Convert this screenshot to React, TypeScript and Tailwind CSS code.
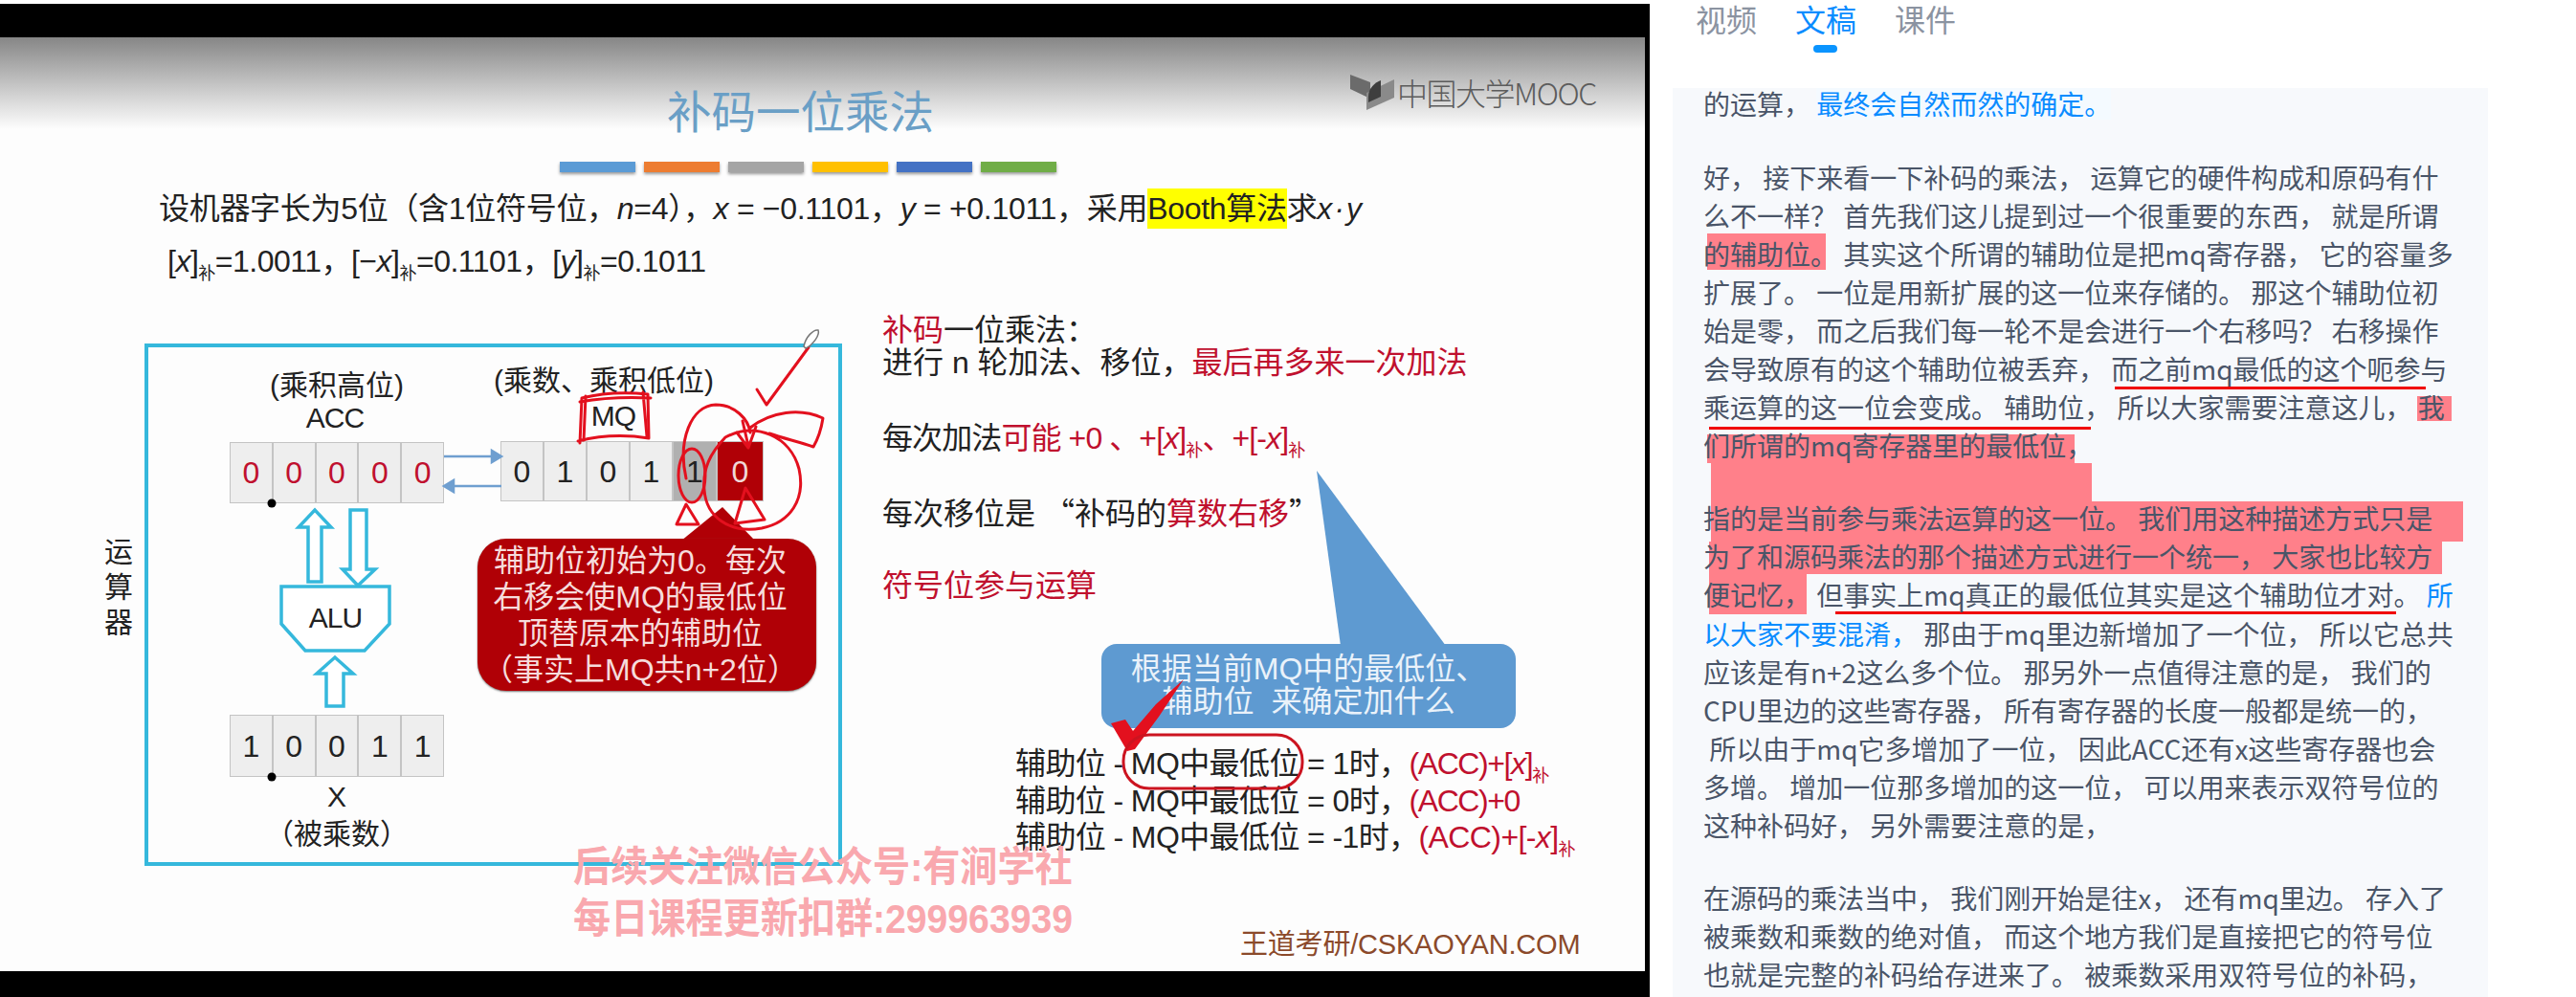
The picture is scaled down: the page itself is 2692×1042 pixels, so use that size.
const sans = "font-['Liberation_Sans','Noto_Sans_CJK_SC',sans-serif]";

function Sub() {
  return <span className="text-[18px] leading-[0] align-[-8px]">补</span>;
}

function Cell({ children, className = '' }: { children?: string; className?: string }) {
  return (
    <div className={`flex items-center justify-center border border-[#c4c4c4] text-[32px] ${className}`}>{children}</div>
  );
}

function Register({ bits, className, cellClass }: { bits: string[]; className: string; cellClass: string }) {
  return (
    <div className={`grid grid-cols-5 w-full ${className}`}>
      {bits.map((b, i) => (
        <Cell key={i} className={cellClass}>{b}</Cell>
      ))}
    </div>
  );
}

function Drawings() {
  return (
    <svg className="absolute left-0 top-0 w-[1724px] h-[1042px] pointer-events-none" viewBox="0 0 1724 1042" fill="none">
      {/* arrows between ACC and MQ */}
      <g stroke="#6f9fd0" strokeWidth="2.5" fill="#6f9fd0">
        <path d="M464 477H518" />
        <path d="M524 477L514 471V483Z" />
        <path d="M470 508H524" />
        <path d="M464 508L474 502V514Z" />
      </g>
      {/* hollow bus arrows and ALU */}
      <g stroke="#35b8dc" strokeWidth="3.5" fill="#fff">
        <path d="M322 608V551H312L329 533L346 551H336V608Z" />
        <path d="M366 533H383V595H392L374 612L358 595H366Z" />
        <path d="M341 738V704H331L350 687L369 704H359V738Z" />
        <path d="M294 613H407V652L381 680H319L294 652Z" />
      </g>
      <circle cx="284" cy="526" r="4.5" fill="#000" />
      <circle cx="284" cy="812" r="4.5" fill="#000" />
      {/* callout pointers */}
      <path d="M712 565L755 530L789 565Z" fill="#b00006" />
      <path d="M1376 492L1401 675H1511Z" fill="#5e9ad1" />
    </svg>
  );
}

function Scribbles() {
  return (
    <svg className="absolute left-0 top-0 w-[1724px] h-[1042px] pointer-events-none" viewBox="0 0 1724 1042" fill="none">
      <g stroke="#e3101e" strokeWidth="3" strokeLinecap="round" strokeLinejoin="round">
        {/* MQ box */}
        <path d="M606 463L608 416Q640 408 677 412L678 458Q640 452 604 461" />
        <path d="M612 414L610 460M672 410L676 456M606 420Q640 414 680 416" />
        {/* tick near pen */}
        <path d="M845 363L801 423L791 407" />
        {/* loops round the low bits */}
        <ellipse cx="723" cy="497" rx="14" ry="28" />
        <path d="M717 500C708 460 722 424 748 423C768 423 782 438 784 452" />
        <path d="M758 457C790 440 826 456 835 490C842 522 826 546 796 552C762 558 738 540 736 512C734 490 742 474 758 457Z" />
        <path d="M784 447C806 430 836 426 860 437C858 450 854 460 850 467C836 462 818 458 804 453" />
        <path d="M770 452L782 468L790 446M776 440L782 466" />
        <path d="M717 527L707 548L730 548Z" />
        <path d="M779 510L768 547L799 543Z" />
      </g>
      {/* pen cursor */}
      <path d="M840 362C842 352 850 344 855 345C857 350 850 360 842 364Z" fill="#fff" stroke="#777" strokeWidth="1.5" />
      {/* big tick and ring on the formula */}
      <path d="M1237 710L1208 736L1184 764L1176 752L1161 756L1178 785L1186 783L1211 749Z" fill="#e3101e" />
      <rect x="1174" y="768" width="187" height="56" rx="27" stroke="#cc1420" strokeWidth="3" />
    </svg>
  );
}

function MoocLogo() {
  return (
    <svg className="w-[48px] h-[38px] shrink-0" viewBox="0 0 48 38">
      <path d="M0 1L21 9V26L0 16Z" fill="#6b6b6b" />
      <path d="M17 20L46 6V25L17 38Z" fill="#8a8a8a" />
      <path d="M19 24C19 15 26 9 32 7V24L19 30Z" fill="#3e3e3e" />
    </svg>
  );
}

function Slide() {
  return (
    <div className={`absolute left-0 top-0 w-[1724px] h-[1042px] text-[#222] ${sans}`}>
      {/* title and colour bars */}
      <div className="absolute left-[585px] top-[93px] flex flex-col items-start gap-[26px]">
        <div className="ml-[112px] text-[46.5px] leading-[50px] text-[#6a9fc6] whitespace-nowrap">补码一位乘法</div>
        <div className="flex gap-[9px]">
          <div className="w-[79px] h-[11px] bg-[#5b9bd5] shadow-[0_2px_3px_#999]" />
          <div className="w-[79px] h-[11px] bg-[#ed7d31] shadow-[0_2px_3px_#999]" />
          <div className="w-[79px] h-[11px] bg-[#a5a5a5] shadow-[0_2px_3px_#999]" />
          <div className="w-[79px] h-[11px] bg-[#ffc000] shadow-[0_2px_3px_#999]" />
          <div className="w-[79px] h-[11px] bg-[#4472c4] shadow-[0_2px_3px_#999]" />
          <div className="w-[79px] h-[11px] bg-[#70ad47] shadow-[0_2px_3px_#999]" />
        </div>
      </div>
      <div className="absolute left-[1411px] top-[77px] flex items-start gap-[1px]">
        <MoocLogo />
        <div className="font-['Noto_Sans_CJK_SC',sans-serif] text-[32px] leading-[38px] font-light text-[#5c5c5c] tracking-[-1.5px] whitespace-nowrap">中国大学MOOC</div>
      </div>

      {/* problem statement */}
      <div className="absolute left-[166px] top-[197px] flex flex-col gap-[14px] whitespace-nowrap">
        <div className="text-[32px] leading-[42px] tracking-[-0.3px]">
          设机器字长为5位（含1位符号位，<i>n</i>=4），<i>x</i> = −0.1101，<i>y</i> = +0.1011，采用<span className="inline-block bg-[#ffff00]">Booth算法</span>求<i className="tracking-[2px]">x·y</i>
        </div>
        <div className="pl-[9px] text-[32px] leading-[40px] tracking-[-0.5px]">
          [<i>x</i>]<Sub />=1.0011，[−<i>x</i>]<Sub />=0.1101，[<i>y</i>]<Sub />=0.1011
        </div>
      </div>

      {/* CPU box */}
      <div className="absolute left-[151px] top-[359px] w-[729px] h-[546px] border-[4px] border-[#35b8dc]" />
      <div className="absolute left-[108px] top-[558px] w-[32px] text-[30px] leading-[37px] text-center">运算器</div>

      <div className="absolute left-[240px] top-[386px] w-[224px] flex flex-col items-center text-[30px] leading-[34px] whitespace-nowrap">
        <div>(乘积高位)</div>
        <div className="mb-[8px] -ml-[4px] tracking-[-1px]">ACC</div>
        <Register bits={['0', '0', '0', '0', '0']} className="h-[64px]" cellClass="bg-[#eeeeee] text-[#c0102e]" />
      </div>

      <div className="absolute left-[523px] top-[378px] w-[275px] flex flex-col items-start text-[30px] whitespace-nowrap">
        <div className="-ml-[7px] leading-[40px]">(乘数、乘积低位)</div>
        <div className="ml-[90px] w-[56px] mb-[9px] leading-[34px] text-center tracking-[-1px]">MQ</div>
        <div className="w-full h-[63px] flex">
          <Cell className="w-[45px] bg-[#eeeeee]">0</Cell>
          <Cell className="w-[45px] bg-[#eeeeee]">1</Cell>
          <Cell className="w-[45px] bg-[#eeeeee]">0</Cell>
          <Cell className="w-[45px] bg-[#eeeeee]">1</Cell>
          <Cell className="w-[46px] bg-[#b0b0b0] border-[#b0b0b0]">1</Cell>
          <Cell className="w-[49px] bg-[#b00006] border-[#b00006] text-[#f0d8d8]">0</Cell>
        </div>
      </div>

      <div className="absolute left-[240px] top-[747px] w-[224px] flex flex-col items-center text-[30px] whitespace-nowrap">
        <Register bits={['1', '0', '0', '1', '1']} className="h-[65px]" cellClass="bg-[#eeeeee]" />
        <div className="mt-[1px] leading-[40px]">X</div>
        <div className="leading-[38px]">（被乘数）</div>
      </div>

      <Drawings />

      <div className="absolute left-[294px] top-[626px] w-[113px] text-center text-[30px] leading-[40px] tracking-[-1px]">ALU</div>

      {/* red callout */}
      <div className="absolute left-[499px] top-[563px] w-[354px] h-[159px] rounded-[30px] bg-[#b00006] shadow-[0_1px_2px_#777] flex flex-col items-center pt-[4px] pr-[14px] text-[32px] leading-[38px] text-[#f6dcdc] whitespace-nowrap">
        <div>辅助位初始为0。每次</div>
        <div>右移会使MQ的最低位</div>
        <div>顶替原本的辅助位</div>
        <div>（事实上MQ共n+2位）</div>
      </div>

      {/* right hand notes */}
      <div className="absolute left-[922px] top-[328px] flex flex-col text-[32px] leading-[34px] whitespace-nowrap">
        <div><span className="text-[#c0102e]">补码</span>一位乘法：</div>
        <div>进行 n 轮加法、移位，<span className="text-[#c0102e]">最后再多来一次加法</span></div>
        <div className="mt-[45px] tracking-[-0.9px]">每次加法<span className="text-[#c0102e]">可能 +0 、+[<i>x</i>]<Sub />、+[-<i>x</i>]<Sub /></span></div>
        <div className="mt-[45px]">每次移位是 <span className="font-['Noto_Sans_CJK_SC',sans-serif] leading-[0]">“</span>补码的<span className="text-[#c0102e]">算数右移</span><span className="font-['Noto_Sans_CJK_SC',sans-serif] leading-[0]">”</span></div>
        <div className="mt-[41px] text-[#c0102e]">符号位参与运算</div>
      </div>

      {/* blue callout */}
      <div className="absolute left-[1151px] top-[673px] w-[433px] h-[88px] rounded-[16px] bg-[#5e9ad1] flex flex-col items-center pt-[9px] text-[32px] leading-[34px] text-[#eaf2fa] whitespace-pre">
        <div>根据当前MQ中的最低位、</div>
        <div>辅助位  来确定加什么</div>
      </div>

      {/* rules for what to add */}
      <div className="absolute left-[1061px] top-[779px] flex flex-col text-[32px] leading-[38.5px] whitespace-nowrap tracking-[-0.6px]">
        <div>辅助位 - MQ中最低位 = 1时，<span className="text-[#c0102e] tracking-[-1.4px]">(ACC)+[<i>x</i>]<Sub /></span></div>
        <div>辅助位 - MQ中最低位 = 0时，<span className="text-[#c0102e] tracking-[-1.4px]">(ACC)+0</span></div>
        <div>辅助位 - MQ中最低位 = -1时，<span className="text-[#c0102e]">(ACC)+[-<i>x</i>]<Sub /></span></div>
      </div>

      {/* watermark */}
      <div className="absolute left-[599px] top-[879px] flex flex-col origin-left scale-x-[0.91] text-[43px] leading-[54px] font-bold text-[#f9a8ae] whitespace-nowrap">
        <div>后续关注微信公众号:有涧学社</div>
        <div>每日课程更新扣群:299963939</div>
      </div>

      <div className="absolute left-[1296px] top-[967px] text-[29px] leading-[40px] text-[#8b4a2b] whitespace-nowrap tracking-[-0.2px]">王道考研/CSKAOYAN.COM</div>

      <Scribbles />
    </div>
  );
}

function VideoPane() {
  return (
    <div className="relative w-[1724px] h-full shrink-0 pt-[4px]">
      <div className="h-full bg-black pt-[35px] pb-[27px] pr-[5px]">
        <div className="h-full bg-[linear-gradient(to_bottom,#868686_0,#d4d4d4_62px,#fdfdfd_96px)]" />
      </div>
      <Slide />
    </div>
  );
}

function Tabs() {
  return (
    <div className="flex gap-[40px] pl-[48px] pt-[1px] h-[92px] text-[32px] leading-[36px] text-[#8b93a1]">
      <div>视频</div>
      <div className="relative text-[#0a8cff]">
        文稿
        <div className="absolute left-[19px] top-[46px] w-[25px] h-[8px] rounded-full bg-[#0a94ff]" />
      </div>
      <div>课件</div>
    </div>
  );
}

function Transcript() {
  const blue = 'text-[#0a8cff]';
  return (
    <div className="relative ml-[24px] w-[852px] h-[950px] bg-[#f7f9fc] overflow-hidden">
      {/* marker highlights */}
      <div className="absolute left-[36px] top-[152px] w-[124px] h-[38px] bg-[#ff808a]" />
      <div className="absolute left-[778px] top-[322px] w-[36px] h-[26px] bg-[#ff808a]" />
      <div className="absolute left-[36px] top-[362px] w-[384px] h-[30px] bg-[#ff808a]" />
      <div className="absolute left-[40px] top-[392px] w-[398px] h-[82px] bg-[#ff808a]" />
      <div className="absolute left-[438px] top-[432px] w-[388px] h-[42px] bg-[#ff808a]" />
      <div className="absolute left-[38px] top-[474px] w-[766px] h-[34px] bg-[#ff808a]" />
      <div className="absolute left-[38px] top-[508px] w-[102px] h-[42px] bg-[#ff808a]" />
      {/* pen underlines */}
      <div className="absolute left-[462px] top-[312px] w-[325px] h-[3px] bg-[#f00000]" />
      <div className="absolute left-[38px] top-[354px] w-[399px] h-[3px] bg-[#f00000]" />
      <div className="absolute left-[170px] top-[547px] w-[586px] h-[3px] bg-[#f00000]" />

      <div className="relative pl-[32px] flex flex-col gap-[36px] text-[28px] leading-[40.1px] text-[#4a5568] whitespace-pre">
        <div className="mb-[3.5px] leading-[33px]">
          <div>的运算， <span className={`${blue} inline-block bg-[#f4faff]`}>最终会自然而然的确定。</span></div>
        </div>
        <div>
          <div>好， 接下来看一下补码的乘法， 运算它的硬件构成和原码有什</div>
          <div>么不一样？ 首先我们这儿提到过一个很重要的东西， 就是所谓</div>
          <div>的辅助位。 其实这个所谓的辅助位是把mq寄存器， 它的容量多</div>
          <div>扩展了。 一位是用新扩展的这一位来存储的。 那这个辅助位初</div>
          <div>始是零， 而之后我们每一轮不是会进行一个右移吗？ 右移操作</div>
          <div>会导致原有的这个辅助位被丢弃， 而之前mq最低的这个呃参与</div>
          <div>乘运算的这一位会变成。 辅助位， 所以大家需要注意这儿， 我</div>
          <div>们所谓的mq寄存器里的最低位，</div>
        </div>
        <div>
          <div>指的是当前参与乘法运算的这一位。 我们用这种描述方式只是</div>
          <div>为了和源码乘法的那个描述方式进行一个统一， 大家也比较方</div>
          <div>便记忆， 但事实上mq真正的最低位其实是这个辅助位才对。 <span className={blue}>所</span></div>
          <div><span className={blue}>以大家不要混淆，</span> 那由于mq里边新增加了一个位， 所以它总共</div>
          <div>应该是有n+2这么多个位。 那另外一点值得注意的是， 我们的</div>
          <div>CPU里边的这些寄存器， 所有寄存器的长度一般都是统一的，</div>
          <div> 所以由于mq它多增加了一位， 因此ACC还有x这些寄存器也会</div>
          <div>多增。 增加一位那多增加的这一位， 可以用来表示双符号位的</div>
          <div>这种补码好， 另外需要注意的是，</div>
        </div>
        <div>
          <div>在源码的乘法当中， 我们刚开始是往x， 还有mq里边。 存入了</div>
          <div>被乘数和乘数的绝对值， 而这个地方我们是直接把它的符号位</div>
          <div>也就是完整的补码给存进来了。 被乘数采用双符号位的补码，</div>
        </div>
      </div>
    </div>
  );
}

export default function App() {
  return (
    <div className="flex w-[2692px] h-[1042px] overflow-hidden bg-white font-['Noto_Sans_CJK_SC',sans-serif]">
      <VideoPane />
      <div className="flex-1 min-w-0">
        <Tabs />
        <Transcript />
      </div>
    </div>
  );
}
